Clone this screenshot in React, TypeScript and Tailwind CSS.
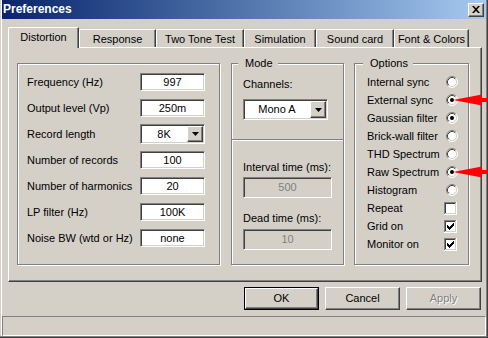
import React from "react";

const sunken =
  "border border-[#808080] border-r-white border-b-white shadow-[inset_1px_1px_0_#404040,inset_-1px_-1px_0_#d4d0c8]";
const raised =
  "border border-white border-r-[#404040] border-b-[#404040] shadow-[inset_-1px_-1px_0_#808080]";
const etched =
  "border border-[#808080] shadow-[inset_1px_1px_0_#ffffff,1px_1px_0_#ffffff]";

function DownArrow() {
  return (
    <svg width="7" height="4" viewBox="0 0 7 4">
      <path d="M0 0H7L3.5 4Z" fill="#000" />
    </svg>
  );
}

function Radio({ on }: { on?: boolean }) {
  return (
    <svg width="12" height="12" viewBox="0 0 12 12" className="block">
      <circle cx="6" cy="6" r="5" fill="#fff" />
      <path d="M2.11 9.89A5.5 5.5 0 0 1 9.89 2.11" fill="none" stroke="#808080" strokeWidth="1" />
      <path d="M9.89 2.11A5.5 5.5 0 0 1 2.11 9.89" fill="none" stroke="#ffffff" strokeWidth="1" />
      <path d="M2.82 9.18A4.5 4.5 0 0 1 9.18 2.82" fill="none" stroke="#404040" strokeWidth="1" />
      <path d="M9.18 2.82A4.5 4.5 0 0 1 2.82 9.18" fill="none" stroke="#d4d0c8" strokeWidth="1" />
      {on && <circle cx="6" cy="6" r="2" fill="#000" />}
    </svg>
  );
}

function Check({ on }: { on?: boolean }) {
  const tops = [5, 6, 7, 6, 5, 4, 3];
  return (
    <svg width="13" height="13" viewBox="0 0 13 13" className="block">
      <rect x="0" y="0" width="13" height="13" fill="#fff" />
      <rect x="0" y="0" width="12" height="1" fill="#808080" />
      <rect x="0" y="0" width="1" height="12" fill="#808080" />
      <rect x="1" y="1" width="10" height="1" fill="#404040" />
      <rect x="1" y="1" width="1" height="10" fill="#404040" />
      <rect x="1" y="11" width="11" height="1" fill="#d4d0c8" />
      <rect x="11" y="1" width="1" height="11" fill="#d4d0c8" />
      {on &&
        tops.map((t, i) => (
          <rect key={i} x={3 + i} y={t} width="1" height="3" fill="#000" />
        ))}
    </svg>
  );
}

function RedArrow({ top }: { top: string }) {
  return (
    <svg
      width="35"
      height="12"
      viewBox="0 0 35 12"
      className={`absolute left-[453px] ${top}`}
    >
      <path d="M0 6L29 0.5V4H35V8H29V11.5Z" fill="#ff0000" />
    </svg>
  );
}

function Field({ value, w = "w-[65px]" }: { value: string; w?: string }) {
  return (
    <div className={`${sunken} ${w} h-[18px] bg-white flex items-center justify-center`}>
      {value}
    </div>
  );
}

function Combo({ value, w, h }: { value: string; w: string; h: string }) {
  return (
    <div className={`${sunken} ${w} ${h} bg-white flex items-center pr-[1px]`}>
      <div className="flex-1 text-center">{value}</div>
      <div className={`${raised} bg-[#d4d0c8] w-[16px] h-[calc(100%-2px)] flex items-center justify-center`}>
        <DownArrow />
      </div>
    </div>
  );
}

function Btn({
  label,
  def,
  disabled,
}: {
  label: string;
  def?: boolean;
  disabled?: boolean;
}) {
  const inner = (
    <div
      className={`${raised} bg-[#d4d0c8] w-full h-full flex items-center justify-center ${
        disabled ? "text-[#808080] [text-shadow:1px_1px_0_#ffffff]" : ""
      }`}
    >
      {label}
    </div>
  );
  if (def) {
    return <div className="w-[75px] h-[23px] border border-black">{inner}</div>;
  }
  return <div className="w-[75px] h-[23px]">{inner}</div>;
}

const tabs = [
  { label: "Distortion", w: "w-[71px]" },
  { label: "Response", w: "w-[77px]" },
  { label: "Two Tone Test", w: "w-[88px]" },
  { label: "Simulation", w: "w-[72px]" },
  { label: "Sound card", w: "w-[78px]" },
  { label: "Font & Colors", w: "w-[75px]" },
];

const leftRows: { label: string; value: string; combo?: boolean }[] = [
  { label: "Frequency (Hz)", value: "997" },
  { label: "Output level (Vp)", value: "250m" },
  { label: "Record length", value: "8K", combo: true },
  { label: "Number of records", value: "100" },
  { label: "Number of harmonics", value: "20" },
  { label: "LP filter (Hz)", value: "100K" },
  { label: "Noise BW (wtd or Hz)", value: "none" },
];

const options: { label: string; kind: "r" | "c"; on?: boolean }[] = [
  { label: "Internal sync", kind: "r" },
  { label: "External sync", kind: "r", on: true },
  { label: "Gaussian filter", kind: "r", on: true },
  { label: "Brick-wall filter", kind: "r" },
  { label: "THD Spectrum", kind: "r" },
  { label: "Raw Spectrum", kind: "r", on: true },
  { label: "Histogram", kind: "r" },
  { label: "Repeat", kind: "c" },
  { label: "Grid on", kind: "c", on: true },
  { label: "Monitor on", kind: "c", on: true },
];

export default function App() {
  return (
    <div className="relative w-[488px] h-[338px] overflow-hidden bg-[#d4d0c8] pl-[2px] pr-[2px] flex flex-col font-['Liberation_Sans',Arial,sans-serif] text-[11px] leading-[13px] text-black shadow-[inset_-1px_-1px_0_#404040,inset_-2px_-2px_0_#808080,inset_1px_0_0_#d4d0c8,inset_2px_0_0_#ffffff]">
      {/* Title bar */}
      <div className="h-[19px] flex items-center pl-[1px] pr-[2px] bg-gradient-to-r from-[#0a246a] to-[#a6caf0] shrink-0">
        <span className="flex-1 text-white font-bold text-[12px] leading-[15px]">Preferences</span>
        <div className={`${raised} bg-[#d4d0c8] w-[16px] h-[14px] flex items-center justify-center`}>
          <svg width="8" height="7" viewBox="0 0 8 7">
            <path d="M0 0H2L4 2.2L6 0H8L5 3.5L8 7H6L4 4.8L2 7H0L3 3.5Z" fill="#000" />
          </svg>
        </div>
      </div>

      {/* Tabs */}
      <div className="mt-[8px] ml-[6px] h-[20px] flex items-end shrink-0">
        {tabs.map((t, i) =>
          i === 0 ? (
            <div
              key={t.label}
              className={`${t.w} relative z-10 -mb-[1px] h-[21px] bg-[#d4d0c8] border-l border-t border-white border-r border-r-[#404040] shadow-[inset_-1px_0_0_#808080] rounded-tl-[2px] flex items-center justify-center pb-[1px]`}
            >
              {t.label}
            </div>
          ) : (
            <div
              key={t.label}
              className={`${t.w} h-[18px] bg-[#d4d0c8] border-l border-t border-white border-r border-r-[#404040] shadow-[inset_-1px_0_0_#808080] rounded-tl-[2px] flex items-center justify-center pt-[1px]`}
            >
              {t.label}
            </div>
          )
        )}
      </div>

      {/* Panel */}
      <div className="ml-[6px] w-[474px] h-[235px] shrink-0 border border-white border-r-[#404040] border-b-[#404040] shadow-[inset_-1px_-1px_0_#808080] pt-[15px] pl-[8px] flex items-start">
        {/* Left group */}
        <div className={`${etched} w-[203px] h-[202px] pt-[9px] pl-[9px] flex flex-col gap-[8px]`}>
          {leftRows.map((r) => (
            <div key={r.label} className="h-[18px] flex items-center">
              <span className="w-[113px]">{r.label}</span>
              {r.combo ? (
                <Combo value={r.value} w="w-[65px]" h="h-[20px]" />
              ) : (
                <Field value={r.value} />
              )}
            </div>
          ))}
        </div>

        {/* Mode group */}
        <div className={`${etched} relative ml-[11px] w-[113px] h-[202px] flex flex-col`}>
          <span className="absolute -top-[7px] left-[6px] pl-[7px] pr-[5px] bg-[#d4d0c8]">Mode</span>
          <div className="h-[75px] pl-[11px] pt-[14px] flex flex-col">
            <span>Channels:</span>
            <div className="mt-[8px]">
              <Combo value="Mono  A" w="w-[85px]" h="h-[21px]" />
            </div>
          </div>
          <div className="h-[2px] border-t border-[#808080] border-b border-b-white" />
          <div className="pl-[11px] pt-[20px] flex flex-col">
            <span>Interval time (ms):</span>
            <div className={`${sunken} mt-[3px] w-[89px] h-[21px] flex items-center justify-center text-[#808080]`}>
              500
            </div>
            <span className="mt-[14px]">Dead time (ms):</span>
            <div className={`${sunken} mt-[4px] w-[89px] h-[21px] flex items-center justify-center text-[#808080]`}>
              10
            </div>
          </div>
        </div>

        {/* Options group */}
        <div className={`${etched} relative ml-[10px] w-[115px] h-[202px] pt-[9px] pl-[12px] flex flex-col`}>
          <span className="absolute -top-[7px] left-[8px] pl-[7px] pr-[5px] bg-[#d4d0c8]">Options</span>
          {options.map((o) => (
            <div key={o.label} className="h-[18px] flex items-center">
              <span className="w-[77px]">{o.label}</span>
              <div className="w-[14px] flex items-center">
                {o.kind === "r" ? (
                  <div className="ml-[2px]">
                    <Radio on={o.on} />
                  </div>
                ) : (
                  <Check on={o.on} />
                )}
              </div>
            </div>
          ))}
        </div>
      </div>

      {/* Buttons */}
      <div className="mt-[5px] h-[23px] shrink-0 flex justify-end gap-[6px] mr-[5px]">
        <Btn label="OK" def />
        <Btn label="Cancel" />
        <Btn label="Apply" disabled />
      </div>

      {/* Status bar */}
      <div className="mt-[6px] h-[20px] shrink-0 border border-[#808080] border-r-white border-b-white" />

      <RedArrow top="top-[94px]" />
      <RedArrow top="top-[166px]" />
    </div>
  );
}
